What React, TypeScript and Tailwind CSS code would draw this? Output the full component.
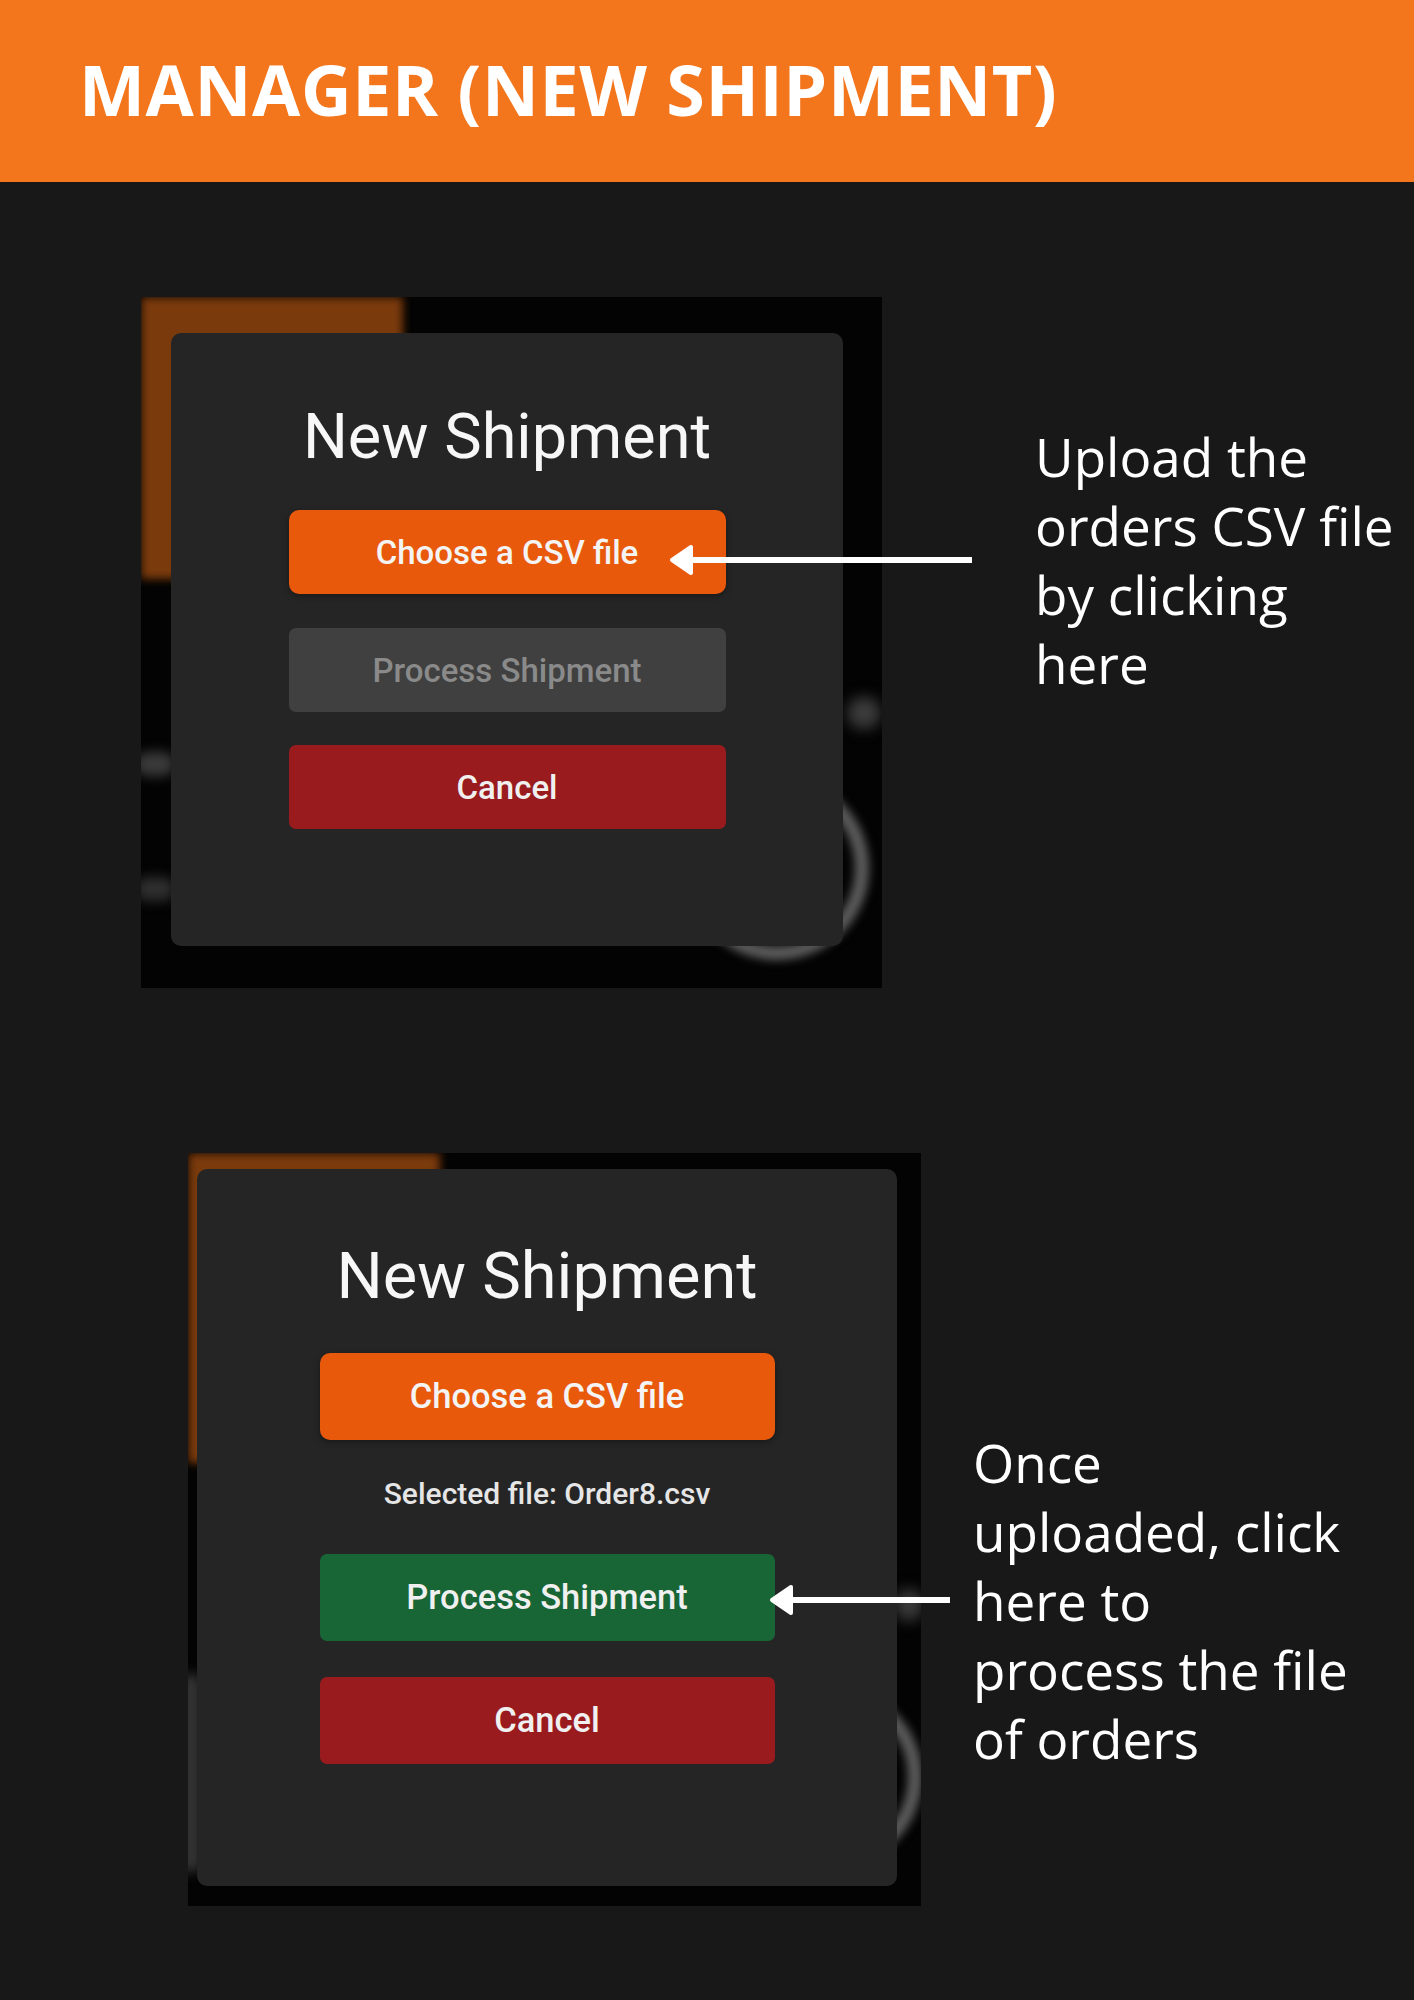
import React from 'react';

const roboto = { fontFamily: 'Roboto, "Open Sans", sans-serif' };
const poppinsLike = { fontFamily: '"Open Sans", "Noto Sans", sans-serif' };

function Arrow({ className, length }: { className: string; length: number }) {
  return (
    <svg className={className} width={length} height={32} viewBox={`0 0 ${length} 32`} fill="none">
      <rect x={18} y={13} width={length - 20} height={6} fill="#ffffff" />
      <path d="M4 16 L23 3 L23 29 Z" fill="#ffffff" stroke="#ffffff" strokeWidth={4} strokeLinejoin="round" />
    </svg>
  );
}

function DialogButton({ label, tone, big }: { label: string; tone: 'orange' | 'gray' | 'green' | 'red'; big?: boolean }) {
  const size = big ? 'h-[87px] w-[455px] text-[34.5px]' : 'h-[84px] w-[437px] text-[33px]';
  const color =
    tone === 'orange'
      ? 'bg-[#e8590c] text-[#f4f4f4] rounded-[10px] shadow-[0_2px_6px_rgba(0,0,0,0.35)]'
      : tone === 'gray'
        ? 'bg-[#404040] text-[#8a8a8a] rounded-[7px]'
        : tone === 'green'
          ? 'bg-[#186535] text-[#f0f0f0] rounded-[7px]'
          : 'bg-[#991b1e] text-[#f0f0f0] rounded-[7px]';
  return (
    <div className={`flex items-center justify-center font-medium leading-none ${size} ${color}`} style={roboto}>
      {label}
    </div>
  );
}

function FirstShot() {
  return (
    <div className="relative w-[741px] h-[691px] shrink-0 bg-[#030303] overflow-hidden pl-[30px] pt-[36px]">
      <div className="absolute left-0 top-0 w-[262px] h-[282px] bg-[#7a3a0c] blur-[4px]" />
      <div className="absolute left-[-6px] top-[455px] w-[40px] h-[24px] rounded-full bg-[#3a3a3a] blur-[6px]" />
      <div className="absolute left-[-6px] top-[580px] w-[40px] h-[24px] rounded-full bg-[#2e2e2e] blur-[6px]" />
      <div className="absolute left-[706px] top-[400px] w-[34px] h-[32px] rounded-full bg-[#3c3c3c] blur-[7px]" />
      <div className="absolute left-[544px] top-[479px] w-[184px] h-[184px] rounded-full border-[14px] border-[#5e5e5e] blur-[5px]" />
      <div className="relative w-[672px] h-[613px] rounded-[10px] bg-[#252525] flex flex-col items-center pt-[72px]">
        <div className="text-[63px] leading-none text-[#f7f7f7]" style={roboto}>
          New Shipment
        </div>
        <div className="mt-[42px]">
          <DialogButton label="Choose a CSV file" tone="orange" />
        </div>
        <div className="mt-[34px]">
          <DialogButton label="Process Shipment" tone="gray" />
        </div>
        <div className="mt-[33px]">
          <DialogButton label="Cancel" tone="red" />
        </div>
      </div>
    </div>
  );
}

function SecondShot() {
  return (
    <div className="relative w-[733px] h-[753px] shrink-0 bg-[#030303] overflow-hidden pl-[9px] pt-[16px]">
      <div className="absolute left-0 top-0 w-[252px] h-[310px] bg-[#7a3a0c] blur-[4px]" />
      <div className="absolute left-[-8px] top-[520px] w-[22px] h-[200px] rounded-full bg-[#333333] blur-[6px]" />
      <div className="absolute left-[706px] top-[436px] w-[30px] h-[32px] rounded-full bg-[#3a3a3a] blur-[7px]" />
      <div className="absolute left-[554px] top-[534px] w-[180px] h-[180px] rounded-full border-[14px] border-[#5e5e5e] blur-[5px]" />
      <div className="relative w-[700px] h-[717px] rounded-[10px] bg-[#252525] flex flex-col items-center pt-[75px]">
        <div className="text-[65px] leading-none text-[#f7f7f7]" style={roboto}>
          New Shipment
        </div>
        <div className="mt-[44px]">
          <DialogButton label="Choose a CSV file" tone="orange" big />
        </div>
        <div className="mt-[39px] text-[30px] leading-none font-medium text-[#e6e6e6]" style={roboto}>
          Selected file: Order8.csv
        </div>
        <div className="mt-[45px]">
          <DialogButton label="Process Shipment" tone="green" big />
        </div>
        <div className="mt-[36px]">
          <DialogButton label="Cancel" tone="red" big />
        </div>
      </div>
    </div>
  );
}

function Note({ lines }: { lines: string[] }) {
  return (
    <div className="text-[53px] leading-[69px] text-white" style={poppinsLike}>
      {lines.map((l) => (
        <div key={l} className="whitespace-nowrap">
          {l}
        </div>
      ))}
    </div>
  );
}

export default function App() {
  return (
    <div className="w-[1414px] h-[2000px] bg-[#181818] overflow-hidden">
      <header className="h-[182px] bg-[#f3751c] pl-[79px] pt-[54px]">
        <h1 className="text-[70px] font-bold leading-none tracking-[0.6px] text-white" style={poppinsLike}>
          MANAGER (NEW SHIPMENT)
        </h1>
      </header>

      <section className="relative mt-[115px] flex pl-[141px]">
        <FirstShot />
        <div className="ml-[153px] pt-[125px]">
          <Note lines={['Upload the', 'orders CSV file', 'by clicking', 'here']} />
        </div>
        <Arrow className="absolute left-[668px] top-[247px]" length={306} />
      </section>

      <section className="relative mt-[165px] flex pl-[188px]">
        <SecondShot />
        <div className="ml-[52px] pt-[275px]">
          <Note lines={['Once', 'uploaded, click', 'here to', 'process the file', 'of orders']} />
        </div>
        <Arrow className="absolute left-[768px] top-[431px]" length={184} />
      </section>
    </div>
  );
}
